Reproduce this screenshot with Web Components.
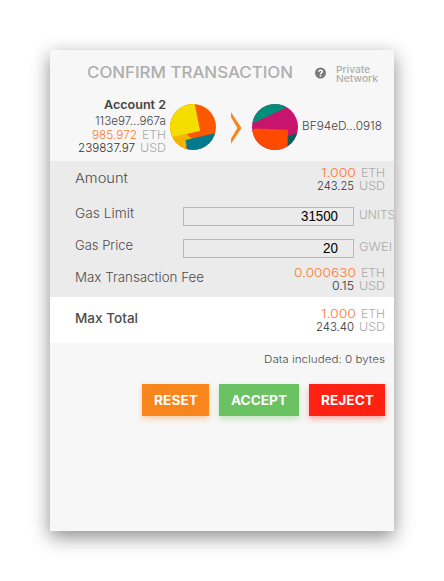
<!DOCTYPE html>
<html lang="en">
<head>
<meta charset="utf-8">
<title>Confirm Transaction</title>
<style>
body { margin: 0; background: #fff; font-family: Inter, "Open Sans", sans-serif; }
</style>
</head>
<body>
<confirm-screen></confirm-screen>
<script>
// Text set to an exact measure: the glyphs are scaled to the given width.
class FitText extends HTMLElement {
  connectedCallback() {
    if (this.shadowRoot) return;
    const w = parseFloat(this.getAttribute('w'));
    this.attachShadow({ mode: 'open' }).innerHTML = `
      <style>
        :host { display: block; flex: none; width: ${w}px; white-space: nowrap; }
        span { display: inline-block; transform-origin: 0 50%; vertical-align: top; }
      </style><span><slot></slot></span>`;
    const s = this.shadowRoot.querySelector('span');
    s.style.transform = `scaleX(${w / s.getBoundingClientRect().width})`;
  }
}

// Ether amount over its dollar value.
class EthBalance extends HTMLElement {
  connectedCallback() {
    if (this.shadowRoot) return;
    const a = n => this.getAttribute(n);
    this.attachShadow({ mode: 'open' }).innerHTML = `
      <style>
        :host { display: block; font-size: 12px; font-weight: 300; line-height: 13px; color: #333; }
        div { display: flex; justify-content: flex-end; gap: 5px; }
        .eth { color: #ff7a33; }
        .unit { color: #aaa; }
      </style>
      <div class="eth"><fit-text w="${a('ew')}">${a('eth')}</fit-text><fit-text class="unit" w="24">ETH</fit-text></div>
      <div><fit-text w="${a('uw')}">${a('usd')}</fit-text><fit-text class="unit" w="26">USD</fit-text></div>`;
  }
}

class AccountIcon extends HTMLElement {
  connectedCallback() {
    if (this.shadowRoot) return;
    const first = this.getAttribute('kind') === 'sender';
    this.attachShadow({ mode: 'open' }).innerHTML = `
      <style>
        :host { display: block; flex: none; width: 46px; height: 46px; border-radius: 50%; overflow: hidden; }
        svg { display: block; }
      </style>
      <svg width="46" height="46" viewBox="0 0 46 46">${first ? `
        <rect width="46" height="46" fill="#fa5900"/>
        <path d="M-2 -2H24.5L30 27L16.5 30L22 35L12 48H-2Z" fill="#f3b500"/>
        <path d="M-2 -2H24L30 26.7L-2 34Z" fill="#f5dd00"/>
        <path d="M15.5 36L48 28.5V48H17.5Z" fill="#037b8f"/>` : `
        <rect width="46" height="46" fill="#c8146c"/>
        <path d="M-2 -2H40V1L-2 20.5Z" fill="#018e7b"/>
        <path d="M40 0L48 24V15Z" fill="#075e5c"/>
        <path d="M34 32.5L48 28V48H34Z" fill="#075e5c"/>
        <path d="M-2 24.3L36 25.8L35.3 48H-2Z" fill="#fc4b00"/>`}
      </svg>`;
  }
}

class DetailRow extends HTMLElement {
  connectedCallback() {
    if (this.shadowRoot) return;
    this.attachShadow({ mode: 'open' }).innerHTML = `
      <style>
        :host { display: flex; justify-content: space-between; align-items: flex-start;
          box-sizing: border-box; height: 32px; padding: 0 9px 0 25px; color: #4d4d4d;
          font-size: 13px; font-weight: 300; line-height: 16px; }
        .label { padding-top: var(--label-top, 4px); }
        .value { padding-top: var(--value-top, 1px); }
      </style>
      <div class="label"><slot name="label"></slot></div>
      <div class="value"><slot></slot></div>`;
  }
}

class GasField extends HTMLElement {
  connectedCallback() {
    if (this.shadowRoot) return;
    const a = n => this.getAttribute(n);
    this.attachShadow({ mode: 'open' }).innerHTML = `
      <style>
        :host { display: flex; width: 202px; gap: 5px; }
        .box { box-sizing: border-box; flex: none; width: 171px; height: 19px; margin-top: 5px;
          border: 1px solid #b8b8b8; padding-right: 15px; display: flex; justify-content: flex-end;
          font: 400 14px/17px "Liberation Sans", sans-serif; color: #000; }
        .unit { font-size: 12px; line-height: 16px; margin-top: 5px; color: #aaa; }
      </style>
      <div class="box"><fit-text w="${a('vw')}">${a('value')}</fit-text></div>
      <fit-text class="unit" w="${a('uw')}">${a('unit')}</fit-text>`;
  }
}

class ActionButton extends HTMLElement {
  connectedCallback() {
    if (this.shadowRoot) return;
    this.attachShadow({ mode: 'open' }).innerHTML = `
      <style>
        :host { display: flex; align-items: center; justify-content: center; height: 32px;
          width: var(--w); background: var(--bg); box-shadow: 0 3px 6px var(--glow);
          box-sizing: border-box; padding-top: 2px;
          color: #fff; font-size: 12.5px; font-weight: 700; line-height: 16px; }
      </style><slot></slot>`;
  }
}

class ConfirmScreen extends HTMLElement {
  connectedCallback() {
    if (this.shadowRoot) return;
    this.attachShadow({ mode: 'open' }).innerHTML = `
      <style>
        :host { display: block; width: 444px; height: 581px; box-sizing: border-box; padding: 50px; }
        .card { width: 344px; height: 481px; overflow: hidden; background: #f7f7f7; }
        .shadow { width: 344px; height: 481px; box-shadow: 0 6px 18px rgba(0,0,0,.46); }
        header { display: flex; height: 48px; box-sizing: border-box; padding: 13px 0 0 37px;
          color: #aeaeae; font-size: 15.5px; font-weight: 500; line-height: 20px; }
        header svg { margin: 4px 10px 0 22px; flex: none; }
        .net { font-size: 9.5px; font-weight: 500; line-height: 9px; padding-top: 2px; }
        .parties { display: flex; height: 63px; font-size: 12px; line-height: 13px; font-weight: 300; color: #444; }
        .from { width: 116px; display: flex; flex-direction: column; align-items: flex-end; }
        .name { font-weight: 600; color: #444; margin-bottom: 3px; }
        .addr { margin-bottom: 1px; }
        .parties account-icon { margin: 6px 0 0 4px; }
        .arrow { margin: 14px 6px 0 14px; flex: none; }
        .to { margin: 21px 0 0 4px; }
        .details { background: #ebebeb; }
        .amount { height: 40px; --label-top: 9px; --value-top: 5px; }
        .gas { padding-right: 9px; --value-top: 1px; }
        .total { height: 46px; background: #fff; --label-top: 13px; --value-top: 10px; }
        .data { display: flex; justify-content: flex-end; padding: 10px 9px 0 0; height: 31px;
          font-size: 10.5px; font-weight: 300; line-height: 14px; color: #4d4d4d; }
        .actions { display: flex; justify-content: flex-end; gap: 10px; padding-right: 9px; }
      </style>
      <div class="shadow"><div class="card">
        <header>
          <fit-text w="206">CONFIRM TRANSACTION</fit-text>
          <svg width="11" height="12" viewBox="0 0 11 12"><circle cx="5.5" cy="6" r="5.5" fill="#7a7a7a"/>
            <path d="M3.7 4.7C3.8 2.6 7.4 2.7 7.3 4.6C7.2 5.9 5.5 5.8 5.5 7.2" fill="none" stroke="#fff" stroke-width="1.5"/>
            <rect x="4.7" y="8" width="1.6" height="1.5" fill="#fff"/></svg>
          <div class="net"><fit-text w="34">Private</fit-text><fit-text w="42">Network</fit-text></div>
        </header>
        <div class="parties">
          <div class="from">
            <fit-text class="name" w="62">Account 2</fit-text>
            <fit-text class="addr" w="71">113e97...967a</fit-text>
            <eth-balance eth="985.972" ew="45" usd="239837.97" uw="57"></eth-balance>
          </div>
          <account-icon kind="sender"></account-icon>
          <svg class="arrow" width="12" height="32" viewBox="0 0 12 32"><path d="M1 .3V5.3L7.4 16L1 26.7V31.8L11.5 16Z" fill="#f7861c"/></svg>
          <account-icon kind="recipient"></account-icon>
          <fit-text class="to" w="80">BF94eD...0918</fit-text>
        </div>
        <div class="details">
          <detail-row class="amount"><fit-text slot="label" w="53">Amount</fit-text>
            <eth-balance eth="1.000" ew="35" usd="243.25" uw="37"></eth-balance></detail-row>
          <detail-row class="gas"><fit-text slot="label" w="59">Gas Limit</fit-text>
            <gas-field value="31500" vw="37" unit="UNITS" uw="36"></gas-field></detail-row>
          <detail-row class="gas"><fit-text slot="label" w="58">Gas Price</fit-text>
            <gas-field value="20" vw="15" unit="GWEI" uw="33"></gas-field></detail-row>
          <detail-row><fit-text slot="label" w="129">Max Transaction Fee</fit-text>
            <eth-balance eth="0.000630" ew="62" usd="0.15" uw="22"></eth-balance></detail-row>
        </div>
        <detail-row class="total"><fit-text slot="label" w="63" style="font-weight:500">Max Total</fit-text>
          <eth-balance eth="1.000" ew="35" usd="243.40" uw="38"></eth-balance></detail-row>
        <div class="data"><fit-text w="121">Data included: 0 bytes</fit-text></div>
        <div class="actions">
          <action-button style="--w:67px;--bg:#f8861c;--glow:rgba(247,134,28,.36)"><fit-text w="44">RESET</fit-text></action-button>
          <action-button style="--w:80px;--bg:#6ac263;--glow:rgba(106,195,96,.36)"><fit-text w="56">ACCEPT</fit-text></action-button>
          <action-button style="--w:76px;--bg:#ff2112;--glow:rgba(255,33,18,.36)"><fit-text w="53">REJECT</fit-text></action-button>
        </div>
      </div></div>`;
  }
}

customElements.define('fit-text', FitText);
customElements.define('eth-balance', EthBalance);
customElements.define('account-icon', AccountIcon);
customElements.define('detail-row', DetailRow);
customElements.define('gas-field', GasField);
customElements.define('action-button', ActionButton);
customElements.define('confirm-screen', ConfirmScreen);
</script>
</body>
</html>
